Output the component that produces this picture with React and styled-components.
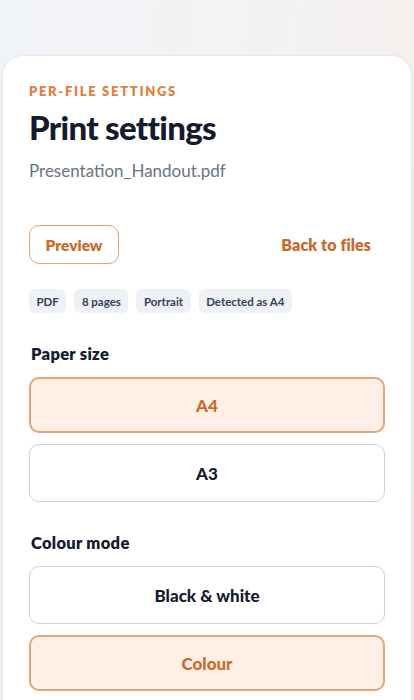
import React from "react";
import styled, { createGlobalStyle } from "styled-components";

const Global = createGlobalStyle`
  html, body { margin: 0; padding: 0; }
  body {
    font-family: "Lato", "Noto Sans", sans-serif;
    background: linear-gradient(100deg, #f1f4f9 0%, #f4f2f3 55%, #f7ede8 100%);
    min-height: 700px;
  }
  * { box-sizing: border-box; }
`;

const Page = styled.div`
  padding: 56px 3px 0 3px;
  min-height: 700px;
`;

const Card = styled.div`
  background: #ffffff;
  border-radius: 20px;
  padding: 26px 26px 40px 26px;
  box-shadow: 0 0 0 1px rgba(226, 230, 236, 0.8), 0 4px 14px rgba(30, 40, 60, 0.05);
`;

const Eyebrow = styled.div`
  color: #e07f3e;
  font-size: 13px;
  font-weight: 800;
  letter-spacing: 1.7px;
  line-height: 18px;
  text-transform: uppercase;
`;

const Title = styled.h1`
  margin: 5px 0 0 0;
  color: #141b2d;
  font-size: 33px;
  font-weight: 900;
  line-height: 44px;
  letter-spacing: -0.7px;
`;

const FileName = styled.div`
  margin-top: 10px;
  color: #6b7385;
  font-size: 17px;
  font-weight: 400;
  line-height: 24px;
`;

const Actions = styled.div`
  margin-top: 42px;
  display: flex;
  align-items: center;
  justify-content: space-between;
  padding-right: 14px;
`;

const OutlineButton = styled.button`
  font-family: inherit;
  height: 39px;
  padding: 0 15.5px;
  border: 1px solid #e9a273;
  border-radius: 10px;
  background: #ffffff;
  color: #c96a2b;
  font-size: 15.5px;
  font-weight: 800;
`;

const LinkButton = styled.button`
  font-family: inherit;
  border: none;
  background: none;
  padding: 0;
  color: #c96a2b;
  font-size: 16px;
  font-weight: 800;
  letter-spacing: 0.1px;
`;

const Chips = styled.div`
  margin-top: 25px;
  display: flex;
  gap: 8px;
`;

const Chip = styled.span`
  height: 24px;
  padding: 0 7.5px;
  display: inline-flex;
  align-items: center;
  border-radius: 6px;
  background: #eef1f6;
  color: #374055;
  font-size: 11.5px;
  font-weight: 700;
`;

const Section = styled.div`
  margin-top: ${(p) => p.$top}px;
  display: flex;
  flex-direction: column;
  gap: 11px;
`;

const Label = styled.div`
  color: #141b2d;
  font-size: 16.5px;
  font-weight: 800;
  line-height: 20px;
  letter-spacing: 0.3px;
  padding-left: 2px;
  margin-bottom: 2px;
`;

const Option = styled.button`
  font-family: inherit;
  height: ${(p) => (p.$active ? 56 : 58)}px;
  width: 100%;
  border-radius: 10px;
  border: ${(p) => (p.$active ? "2px solid #e9a273" : "1px solid #cdd0d7")};
  background: ${(p) => (p.$active ? "#fff0e7" : "#ffffff")};
  color: ${(p) => (p.$active ? "#c96a2b" : "#141b2d")};
  font-size: 17px;
  font-weight: 900;
`;

export default function App() {
  return (
    <Page>
      <Global />
      <Card>
        <Eyebrow>Per-file settings</Eyebrow>
        <Title>Print settings</Title>
        <FileName>Presentation_Handout.pdf</FileName>
        <Actions>
          <OutlineButton>Preview</OutlineButton>
          <LinkButton>Back to files</LinkButton>
        </Actions>
        <Chips>
          <Chip>PDF</Chip>
          <Chip>8 pages</Chip>
          <Chip>Portrait</Chip>
          <Chip>Detected as A4</Chip>
        </Chips>
        <Section $top={31}>
          <Label>Paper size</Label>
          <Option $active>A4</Option>
          <Option>A3</Option>
        </Section>
        <Section $top={31}>
          <Label>Colour mode</Label>
          <Option>Black &amp; white</Option>
          <Option $active>Colour</Option>
        </Section>
      </Card>
    </Page>
  );
}
